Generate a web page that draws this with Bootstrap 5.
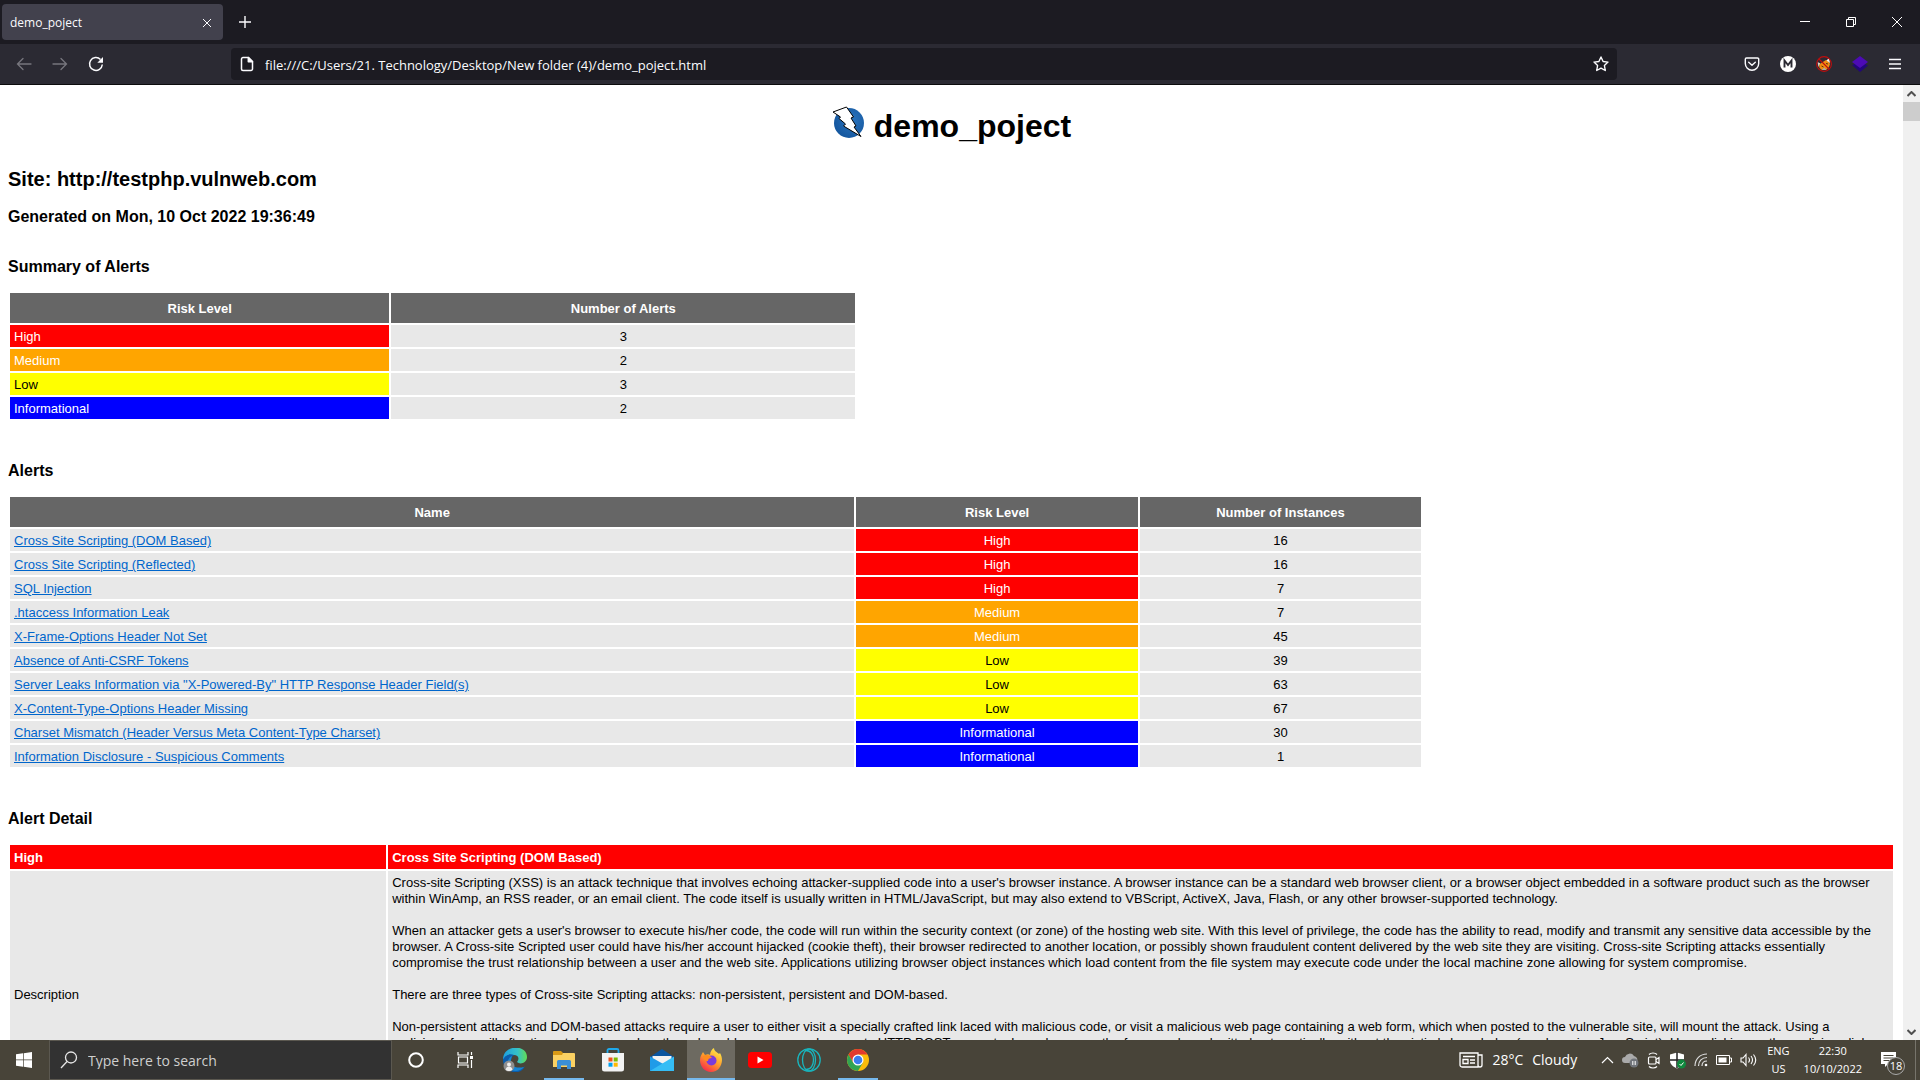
<!DOCTYPE html>
<html lang="en">
<head>
<meta charset="utf-8">
<meta name="viewport" content="width=device-width, initial-scale=1">
<title>demo_poject</title>
<link href="https://cdn.jsdelivr.net/npm/bootstrap@5.3.0/dist/css/bootstrap.min.css" rel="stylesheet">
<style>
  body { font-family: "Open Sans", "Noto Sans", sans-serif; font-size: 13px; line-height: 16px; color: #000; background: #fff; }
  svg { display: block; flex: none; }
  button { border: 0; background: none; padding: 0; color: inherit; }
  .tabstrip { background: #1c1b22; height: 44px; color: #fbfbfe; }
  .tab-item { width: 221px; height: 36px; margin-left: 2px; padding: 2px 11px 0 8px; background: #42414d; border-radius: 4px; font-size: 12px; }
  .tab-plus { margin-left: 14px; }
  .win-btns { gap: 30px; padding-right: 15px; }
  .toolbar { background: #2b2a33; height: 41px; border-bottom: 1px solid #0c0c0d; color: #fbfbfe; }
  .nav-btns { width: 231px; padding-left: 16px; gap: 20px; }
  .url-box { height: 32px; background: #1c1b22; border-radius: 4px; padding: 0 7px 0 9px; gap: 11px; }
  .url-box input, .find-box input { background: none; border: 0; outline: 0; padding: 0; color: inherit; min-width: 0; }
  .url-box input { font-size: 13px; padding-top: 2px; }
  .ext-btns { width: 303px; padding-right: 18px; gap: 12px; }
  .report { font-family: "Liberation Sans", Arial, sans-serif; padding: 23px 8px 0; min-width: 0; }
  .report h1 { font-size: 32px; line-height: 36px; height: 36px; font-weight: 700; gap: 10px; margin: 0 0 23px; }
  .report h2 { font-size: 20px; line-height: 24px; font-weight: 700; margin: 0 0 16px; }
  .report h3 { font-size: 16px; line-height: 20px; font-weight: 700; margin: 0 0 14px; }
  .report h3.stamp { margin-bottom: 30px; }
  .title-mark { margin-bottom: 8px; }
  .grid-table { border-collapse: separate; border-spacing: 2px; table-layout: fixed; margin-bottom: 40px; font-size: 13px; line-height: 16px; }
  .grid-table th, .grid-table td { padding: 4px 4px 2px; background: #e8e8e8; }
  .grid-table thead th { background: #666; color: #fff; text-align: center; height: 30px; }
  .grid-table .lv-high { background: #f00; color: #fff; }
  .grid-table .lv-medium { background: orange; color: #fff; }
  .grid-table .lv-low { background: #ff0; color: #000; }
  .grid-table .lv-info { background: #00f; color: #fff; }
  .grid-table a { color: #06c; text-decoration: underline; }
  .w-sum { width: 45%; } .w-list { width: 75%; }
  .grid-table .detail-head th { padding: 5px 4px 3px; text-align: left; }
  .scroller { width: 17px; flex: none; background: #f0f0f0; }
  .thumb { height: 19px; background: #cdcdcd; }
  .arrow { height: 17px; }
  .taskbar { position: relative; height: 40px; background: #484439; color: #fff; }
  .start { width: 48px; }
  .find-box { width: 343px; background: #323232; border: 1px solid #5b5850; color: #fff; padding-left: 10px; gap: 10px; margin-left: 1px; }
  .find-box input { font-size: 14px; padding-top: 2px; }
  .find-box input::placeholder { color: #cfcfcf; opacity: 1; }
  .task { width: 48px; height: 40px; margin-right: 1px; border-bottom: 2px solid transparent; padding-top: 2px; }
  .pins { margin-left: 1px; }
  .running { width: 40px; margin: 0 5px 0 4px; border-color: #76b9ed; }
  .current { background: #6d6a61; border-color: #76b9ed; }
  .weather { font-size: 14px; gap: 9px; }
  .tray { gap: 8px; }
  .stack { line-height: 18px; font-size: 11px; text-align: center; }
  .lang { margin-left: 10px; }
  .clock { margin: 0 18px 0 14px; }
  .notes { margin-right: 17px; }
  .count { left: 7px; top: 6px; width: 18px; height: 18px; border: 1px solid #aaa; border-radius: 50%; background: #484439; font-size: 11px; line-height: 15px; }
  .peek { border-left: 1px solid #77746b; width: 5px; }
</style>
</head>
<body class="vh-100 d-flex flex-column overflow-hidden">
<header>
  <div class="tabstrip d-flex align-items-center">
    <div class="tab-item d-flex align-items-center justify-content-between">
      <span>demo_poject</span>
      <button aria-label="Close tab"><svg width="10" height="10" viewBox="0 0 10 10" stroke="#fbfbfe"><path d="M1 1l8 8M9 1L1 9"/></svg></button>
    </div>
    <button class="tab-plus" aria-label="New tab"><svg width="16" height="16" viewBox="0 0 16 16" stroke="#fbfbfe" stroke-width="1.4"><path d="M8 2v12M2 8h12"/></svg></button>
    <div class="win-btns d-flex ms-auto">
      <button aria-label="Minimize"><svg width="16" height="16" viewBox="0 0 16 16" stroke="#fff"><path d="M3 7.500h10"/></svg></button>
      <button aria-label="Restore"><svg width="16" height="16" viewBox="0 0 16 16" fill="none" stroke="#fff"><path d="M3.500 5.500h7v7h-7zM5.500 5.500v-2h7v7h-2"/></svg></button>
      <button aria-label="Close"><svg width="16" height="16" viewBox="0 0 16 16" stroke="#fff"><path d="M3 3l10 10M13 3L3 13"/></svg></button>
    </div>
  </div>
  <div class="toolbar d-flex align-items-center">
    <div class="nav-btns d-flex">
      <button aria-label="Back"><svg width="16" height="16" viewBox="0 0 16 16" fill="none" stroke="#77767e" stroke-width="1.300" stroke-linecap="round"><path d="M15 8H1.500M7 2.500L1.500 8 7 13.500"/></svg></button>
      <button aria-label="Forward"><svg width="16" height="16" viewBox="0 0 16 16" fill="none" stroke="#77767e" stroke-width="1.300" stroke-linecap="round"><path d="M1 8h13.500M9 2.500L14.500 8 9 13.500"/></svg></button>
      <button aria-label="Reload"><svg width="16" height="16" viewBox="0 0 16 16" fill="none" stroke="#fbfbfe" stroke-width="1.500"><path d="M14.300 8.500A6.400 6.400 0 1 1 12.500 3.500"/><path d="M15 1v5.700H9.300z" fill="#fbfbfe" stroke="none"/></svg></button>
    </div>
    <div class="url-box d-flex align-items-center flex-grow-1">
      <svg width="14" height="16" viewBox="0 0 14 16" fill="none" stroke="#fbfbfe" stroke-width="1.500" stroke-linejoin="round"><path d="M3 1.500h5.500l4 4V13a1.500 1.500 0 0 1-1.500 1.500H3A1.500 1.500 0 0 1 1.500 13V3A1.500 1.500 0 0 1 3 1.500z"/><path d="M8.300 1.500v4.200h4.200z" fill="#fbfbfe"/></svg>
      <input class="flex-grow-1" type="text" aria-label="Address" value="file:///C:/Users/21. Technology/Desktop/New folder (4)/demo_poject.html">
      <button aria-label="Bookmark"><svg width="18" height="18" viewBox="0 0 18 18" fill="none" stroke="#fbfbfe" stroke-width="1.400" stroke-linejoin="round"><path d="M9 2l2.100 4.500 4.900.6-3.600 3.400.9 5L9 13.100l-4.300 2.400.9-5L2 7.100l4.900-.6z"/></svg></button>
    </div>
    <div class="ext-btns d-flex justify-content-end align-items-center">
      <button class="px-1" aria-label="Pocket"><svg width="16" height="16" viewBox="0 0 16 16" fill="none" stroke="#fbfbfe" stroke-width="1.400" stroke-linecap="round" stroke-linejoin="round"><path d="M2.500 2h11a1.200 1.200 0 0 1 1.200 1.200V7.500a6.700 6.700 0 0 1-13.400 0V3.200A1.200 1.200 0 0 1 2.500 2z"/><path d="M4.700 6.300L8 9.300l3.300-3"/></svg></button>
      <button class="px-1" aria-label="Account M"><svg width="16" height="16" viewBox="0 0 16 16"><circle cx="8" cy="8" r="8" fill="#fff"/><path d="M4.500 11.500v-7L8 9l3.500-4.500v7" fill="none" stroke="#2b2a33" stroke-width="1.900"/></svg></button>
      <button class="px-1" aria-label="Proxy disabled"><svg width="16" height="16" viewBox="0 0 16 16"><path d="M1.500 6l3 1.500L2.500 11z" fill="#d8d2cc"/><path d="M3 9l3-2.500L10 4l2 .5L14 8l-1 3-3 3H6L3.500 12z" fill="#f08c12"/><path d="M10.500 4.500l2.500-2.500 1 5z" fill="#f4f0ec"/><path d="M6 14l2-2.500 2.500 2.500z" fill="#aaa"/><path d="M5.500 10l2 1M10 7.500l2 .5" stroke="#57340c"/><circle cx="8" cy="8" r="7.400" fill="none" stroke="#c00d0d" stroke-width="1.100"/><path d="M3 3l10 10" stroke="#c00d0d" stroke-width="1.100"/></svg></button>
      <button class="px-1" aria-label="Layers"><svg width="16" height="16" viewBox="0 0 16 16"><path d="M0 9l3-1h10l3 1.500L8 16z" fill="#22067a"/><path d="M8 0l8 6-8 6-8-6z" fill="#4c0bb5"/></svg></button>
      <button class="ps-1" aria-label="Menu"><svg width="14" height="16" viewBox="0 0 14 16" stroke="#fbfbfe" stroke-width="1.300"><path d="M1 3.500h12M1 8h12M1 12.500h12"/></svg></button>
    </div>
  </div>
</header>

<div class="d-flex flex-grow-1 overflow-hidden">
  <main class="report flex-grow-1 overflow-hidden">
    <h1 class="d-flex justify-content-center align-items-center">
      <svg class="title-mark" width="32" height="32" viewBox="0 0 32 32"><defs><radialGradient id="zap" cx=".6" cy=".4" r=".6"><stop offset="0" stop-color="#2b74bd"/><stop offset="1" stop-color="#1558a0"/></radialGradient></defs><circle cx="17" cy="17" r="15" fill="url(#zap)"/><path d="M1 6L14.500 1l7 10-2.500 1 5 8-2 1 7 9.500L11.500 20l2-2L7 12.500l1.500-1.500z" fill="#fff" stroke="#000" stroke-linejoin="round"/></svg>
      <span>demo_poject</span>
    </h1>
    <h2>Site: http://testphp.vulnweb.com</h2>
    <h3 class="stamp">Generated on Mon, 10 Oct 2022 19:36:49</h3>

    <h3>Summary of Alerts</h3>
    <table class="grid-table w-sum">
      <colgroup><col style="width:45%"><col style="width:55%"></colgroup>
      <thead><tr><th>Risk Level</th><th>Number of Alerts</th></tr></thead>
      <tbody>
        <tr><td class="lv-high">High</td><td class="text-center">3</td></tr>
        <tr><td class="lv-medium">Medium</td><td class="text-center">2</td></tr>
        <tr><td class="lv-low">Low</td><td class="text-center">3</td></tr>
        <tr><td class="lv-info">Informational</td><td class="text-center">2</td></tr>
      </tbody>
    </table>

    <h3>Alerts</h3>
    <table class="grid-table w-list">
      <colgroup><col style="width:60%"><col style="width:20%"><col style="width:20%"></colgroup>
      <thead><tr><th>Name</th><th>Risk Level</th><th>Number of Instances</th></tr></thead>
      <tbody>
        <tr><td><a href="#dom">Cross Site Scripting (DOM Based)</a></td><td class="lv-high text-center">High</td><td class="text-center">16</td></tr>
        <tr><td><a href="#dom">Cross Site Scripting (Reflected)</a></td><td class="lv-high text-center">High</td><td class="text-center">16</td></tr>
        <tr><td><a href="#dom">SQL Injection</a></td><td class="lv-high text-center">High</td><td class="text-center">7</td></tr>
        <tr><td><a href="#dom">.htaccess Information Leak</a></td><td class="lv-medium text-center">Medium</td><td class="text-center">7</td></tr>
        <tr><td><a href="#dom">X-Frame-Options Header Not Set</a></td><td class="lv-medium text-center">Medium</td><td class="text-center">45</td></tr>
        <tr><td><a href="#dom">Absence of Anti-CSRF Tokens</a></td><td class="lv-low text-center">Low</td><td class="text-center">39</td></tr>
        <tr><td><a href="#dom">Server Leaks Information via "X-Powered-By" HTTP Response Header Field(s)</a></td><td class="lv-low text-center">Low</td><td class="text-center">63</td></tr>
        <tr><td><a href="#dom">X-Content-Type-Options Header Missing</a></td><td class="lv-low text-center">Low</td><td class="text-center">67</td></tr>
        <tr><td><a href="#dom">Charset Mismatch (Header Versus Meta Content-Type Charset)</a></td><td class="lv-info text-center">Informational</td><td class="text-center">30</td></tr>
        <tr><td><a href="#dom">Information Disclosure - Suspicious Comments</a></td><td class="lv-info text-center">Informational</td><td class="text-center">1</td></tr>
      </tbody>
    </table>

    <h3>Alert Detail</h3>
    <table class="grid-table w-100" id="dom">
      <colgroup><col style="width:20%"><col style="width:80%"></colgroup>
      <tbody>
        <tr class="detail-head"><th class="lv-high">High</th><th class="lv-high">Cross Site Scripting (DOM Based)</th></tr>
        <tr>
          <td>Description</td>
          <td>Cross-site Scripting (XSS) is an attack technique that involves echoing attacker-supplied code into a user's browser instance. A browser instance can be a standard web browser client, or a browser object embedded in a software product such as the browser within WinAmp, an RSS reader, or an email client. The code itself is usually written in HTML/JavaScript, but may also extend to VBScript, ActiveX, Java, Flash, or any other browser-supported technology.<br><br>
          When an attacker gets a user's browser to execute his/her code, the code will run within the security context (or zone) of the hosting web site. With this level of privilege, the code has the ability to read, modify and transmit any sensitive data accessible by the browser. A Cross-site Scripted user could have his/her account hijacked (cookie theft), their browser redirected to another location, or possibly shown fraudulent content delivered by the web site they are visiting. Cross-site Scripting attacks essentially compromise the trust relationship between a user and the web site. Applications utilizing browser object instances which load content from the file system may execute code under the local machine zone allowing for system compromise.<br><br>
          There are three types of Cross-site Scripting attacks: non-persistent, persistent and DOM-based.<br><br>
          Non-persistent attacks and DOM-based attacks require a user to either visit a specially crafted link laced with malicious code, or visit a malicious web page containing a web form, which when posted to the vulnerable site, will mount the attack. Using a<br>
          malicious form will oftentimes take place when the vulnerable resource only accepts HTTP POST requests. In such a case, the form can be submitted automatically, without the victim's knowledge (e.g. by using JavaScript). Upon clicking on the malicious link or submitting the malicious form, the XSS payload will get echoed back and will get interpreted by the user's browser and execute. Another technique to send almost arbitrary requests (GET and POST) is by using an embedded client, such as Adobe Flash.<br><br>
          Persistent attacks occur when the malicious code is submitted to a web site where it's stored for a period of time. Examples of an attacker's favorite targets often include message board posts, web mail messages, and web chat software. The unsuspecting user is not required to interact with any additional site/link (e.g. an attacker site or a malicious link sent via email), just simply view the web page containing the code.</td>
        </tr>
      </tbody>
    </table>
  </main>
  <div class="scroller d-flex flex-column">
    <div class="arrow d-flex align-items-center justify-content-center"><svg width="9" height="6" viewBox="0 0 9 6" fill="none" stroke="#505050" stroke-width="2"><path d="M.5 5l4-4 4 4"/></svg></div>
    <div class="thumb"></div>
    <div class="arrow mt-auto d-flex align-items-center justify-content-center"><svg width="9" height="6" viewBox="0 0 9 6" fill="none" stroke="#505050" stroke-width="2"><path d="M.5 1l4 4 4-4"/></svg></div>
  </div>
</div>

<footer class="taskbar d-flex align-items-stretch">
  <button class="start d-flex align-items-center justify-content-center" aria-label="Start"><svg width="16" height="16" viewBox="0 0 16 16" fill="#fff"><path d="M0 2.300L7 1.300v6.300H0zM7.700 1.200L16 0v7.600H7.700zM0 8.300h7v6.400l-7-1zM7.700 8.300H16V16l-8.300-1.200z"/></svg></button>
  <div class="find-box d-flex align-items-center">
    <svg width="18" height="18" viewBox="0 0 18 18" fill="none" stroke="#e6e6e6" stroke-width="1.300"><circle cx="11" cy="6.500" r="5.500"/><path d="M7 10.500L1 17"/></svg>
    <input class="flex-grow-1" type="text" aria-label="Search" placeholder="Type here to search">
  </div>
  <div class="d-flex">
    <button class="task d-flex align-items-center justify-content-center" aria-label="Cortana"><svg width="16" height="16" viewBox="0 0 16 16"><circle cx="8" cy="8" r="6.800" fill="none" stroke="#fff" stroke-width="2"/></svg></button>
    <button class="task d-flex align-items-center justify-content-center" aria-label="Task view"><svg width="17" height="16" viewBox="0 0 17 16" fill="none" stroke="#fff" stroke-width="1.200"><path d="M1 0v3h10V0M1 16v-3h10v3M1.500 5h9v6h-9zM14.500 0v3M14.500 8v8"/><path d="M13 4h3v3h-3z" fill="#fff" stroke="none"/></svg></button>
  </div>
  <div class="pins d-flex">
    <button class="task d-flex align-items-center justify-content-center" aria-label="Edge"><svg width="24" height="24" viewBox="0 0 24 24"><defs><linearGradient id="eg" x1="0" x2="1"><stop offset="0" stop-color="#1e9fe0"/><stop offset=".6" stop-color="#35c1c8"/><stop offset="1" stop-color="#62dd55"/></linearGradient></defs><path d="M0 12C0-4 24-4 24 9c0 6-7 8-10 5 3-4 1-7-3-7C6 7 2 9 0 12z" fill="url(#eg)"/><path d="M0 12c1-4 6-7 11-5-5 3-4 11 2 13 4 1 7 0 9-2-3 7-11 8-16 4-4-2-6-6-6-10z" fill="#0c5cab"/><path d="M8 12c-1 6 5 9 13 7-5 6-14 5-16-1-1-5 1-9 4-10z" fill="#1785d3"/><circle cx="6" cy="18" r="5.500" fill="#8f8f8f"/><circle cx="6" cy="16.500" r="2" fill="#eee"/><path d="M2.500 21.500c1-4 6-4 7 0-2 2-5 2-7 0z" fill="#eee"/></svg></button>
    <button class="task running d-flex align-items-center justify-content-center" aria-label="File Explorer"><svg width="22" height="20" viewBox="0 0 22 20"><path d="M0 2a1 1 0 0 1 1-1h7l2 2v3H0z" fill="#d99a16"/><path d="M0 5h9l1-2h11a1 1 0 0 1 1 1v13H0z" fill="#fbd162"/><path d="M4 19v-7.500A1.500 1.500 0 0 1 5.500 10h11a1.500 1.500 0 0 1 1.500 1.500V19h-4v-3.500H8V19z" fill="#3b8fd6"/></svg></button>
    <button class="task d-flex align-items-center justify-content-center" aria-label="Microsoft Store"><svg width="24" height="24" viewBox="0 0 24 24"><path d="M6.500 6V2.500A1.500 1.500 0 0 1 8 1h8a1.500 1.500 0 0 1 1.500 1.500V6" fill="none" stroke="#1fa9ea" stroke-width="1.800"/><path d="M1 5h22v16a2.500 2.500 0 0 1-2.500 2.500h-17A2.500 2.500 0 0 1 1 21z" fill="#f3f3f3"/><path d="M7.500 9.500h4v4h-4z" fill="#f1511b"/><path d="M12.700 9.500h4v4h-4z" fill="#7fba00"/><path d="M7.500 14.700h4v4h-4z" fill="#00a1f1"/><path d="M12.700 14.700h4v4h-4z" fill="#ffb900"/></svg></button>
    <button class="task d-flex align-items-center justify-content-center" aria-label="Mail"><svg width="24" height="22" viewBox="0 0 24 22"><path d="M0 8L12 0l12 8v4H0z" fill="#0a55a0"/><path d="M2.500 7h19v6L12 16 2.500 12z" fill="#f2f2f2"/><path d="M0 7.500L15 16l9 6H0z" fill="#1f9be8"/><path d="M0 22L24 7.500V22z" fill="#35bdf5"/></svg></button>
    <button class="task current d-flex align-items-center justify-content-center" aria-label="Firefox"><svg width="24" height="24" viewBox="0 0 24 24"><defs><linearGradient id="ff" x1=".8" y1="0" x2=".2" y2="1"><stop offset="0" stop-color="#fff04a"/><stop offset=".5" stop-color="#ff9a2c"/><stop offset="1" stop-color="#f7204c"/></linearGradient></defs><path d="M1 12C1 8 3 6 4 4l2 3c2-1 4-1 5 0 0-3 2-6 4-7 0 3 3 4 5 6l1-1c5 8 0 19-9 19C6 24 1 19 1 12z" fill="url(#ff)"/><circle cx="12.500" cy="12.500" r="5" fill="#7a3bdc"/><path d="M4 8c3-2 7-1 9 2-3 0-4 1-4 3-3 0-5-2-5-5z" fill="#ff8a1e"/></svg></button>
    <button class="task d-flex align-items-center justify-content-center" aria-label="YouTube"><svg width="24" height="16" viewBox="0 0 24 16"><rect width="24" height="16" rx="3.500" fill="#f00"/><path d="M9.500 4.500l6 3.500-6 3.500z" fill="#fff"/></svg></button>
    <button class="task d-flex align-items-center justify-content-center" aria-label="Opera"><svg width="24" height="24" viewBox="0 0 24 24" fill="none" stroke="#19b5bd" stroke-width="1.300"><circle cx="12" cy="12" r="11.200"/><ellipse cx="12" cy="12" rx="6.500" ry="11"/><path d="M9 2.500c10 0 10 19 0 19"/></svg></button>
    <button class="task running d-flex align-items-center justify-content-center" aria-label="Chrome"><svg width="22" height="22" viewBox="0 0 22 22"><circle cx="11" cy="11" r="11" fill="#fbbc09"/><path d="M1.500 5.500a11 11 0 0 1 19 0H11L6.200 13.800z" fill="#e23a2e"/><path d="M1.500 5.500l4.700 8.300h9.600L11 22A11 11 0 0 1 1.500 5.500z" fill="#31a452"/><circle cx="11" cy="11" r="5.500" fill="#fff"/><circle cx="11" cy="11" r="4.300" fill="#3b7ded"/></svg></button>
  </div>
  <div class="ms-auto d-flex align-items-center">
    <button class="weather d-flex align-items-center me-4"><svg width="24" height="16" viewBox="0 0 24 16" fill="none" stroke="#fff" stroke-width="1.300"><path d="M1 1h18v14H3a2 2 0 0 1-2-2zM19 3h4v10a2 2 0 0 1-4 0M4 4.500h12M4 7.500h5v4H4zM11 8h5M11 11h5"/></svg><span>28°C</span><span>Cloudy</span></button>
    <div class="tray d-flex align-items-center">
      <svg width="13" height="8" viewBox="0 0 13 8" fill="none" stroke="#fff" stroke-width="1.200"><path d="M1 7l5.500-5.500L12 7"/></svg>
      <svg width="17" height="16" viewBox="0 0 17 16"><path d="M3 11a3 3 0 0 1 0-6 5 5 0 0 1 9-1 4 4 0 0 1 2 7z" fill="#aaa"/><circle cx="12" cy="11" r="4.500" fill="#70747a"/><path d="M10.800 9v4M13.200 9v4" stroke="#fff"/></svg>
      <svg width="14" height="17" viewBox="0 0 14 17" fill="none" stroke="#fff" stroke-width="1.200"><rect x="1.500" y="5" width="7.500" height="7" rx="1"/><path d="M9 7.500l3-2v6l-3-2M2 2.500c2-2 6-2 8 0M2 14.500c2 2 6 2 8 0"/></svg>
      <svg width="17" height="17" viewBox="0 0 17 17"><path d="M8 .5l7 2v6c0 4-3 6-7 8-4-2-7-4-7-8v-6z" fill="#fff"/><path d="M8 0v16M1 8h14" stroke="#222" stroke-width="1.500"/><circle cx="12.500" cy="12" r="4.500" fill="#10893e"/><path d="M10.500 12l1.500 1.500 2.500-3" fill="none" stroke="#fff"/></svg>
      <svg width="14" height="14" viewBox="0 0 14 14" fill="none" stroke="#ddd" stroke-width="1.200"><path d="M1 13C1 6 6 1 13 1M4.500 13C4.500 8 8 4.500 13 4.500M8 13c0-3 2-5 5-5"/><circle cx="12" cy="12" r="1.300" fill="#fff" stroke="none"/></svg>
      <svg width="16" height="10" viewBox="0 0 16 10"><path d="M.5.5h13v9H.5zM14 3h1.500v4H14" fill="none" stroke="#fff"/><path d="M2.500 2.500h8v5h-8z" fill="#fff"/></svg>
      <svg width="17" height="14" viewBox="0 0 17 14" fill="none" stroke="#fff" stroke-width="1.100"><path d="M1 5h2l3-3.500v11L3 9H1zM8.500 4.500q2 2.500 0 5M11 3q3 4 0 8M13.500 1.500q4.500 5.500 0 11"/></svg>
    </div>
    <div class="stack lang">ENG<br>US</div>
    <div class="stack clock">22:30<br>10/10/2022</div>
    <button class="notes position-relative" aria-label="Notifications"><svg width="18" height="18" viewBox="0 0 18 18"><path d="M1 1h15v12H8l-3 3v-3H1z" fill="#fff"/><path d="M3.500 4.500h10M3.500 7h10M3.500 9.500h7" stroke="#484439"/></svg><span class="count position-absolute">18</span></button>
    <span class="peek align-self-stretch"></span>
  </div>
</footer>
<script src="https://cdn.jsdelivr.net/npm/bootstrap@5.3.0/dist/js/bootstrap.bundle.min.js"></script>
</body>
</html>
